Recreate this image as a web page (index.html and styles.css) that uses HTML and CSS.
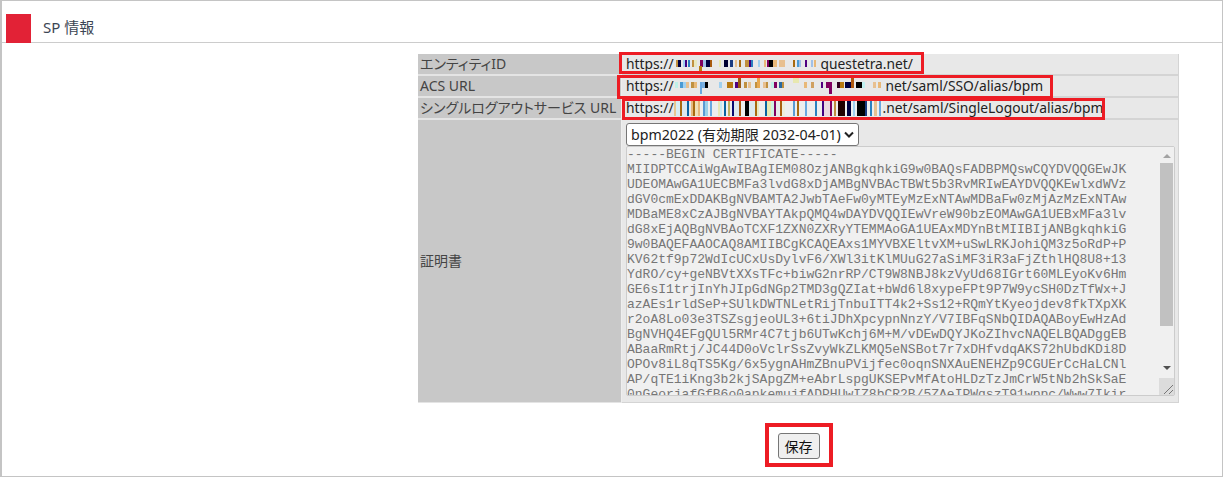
FILE: index.html
```html
<!DOCTYPE html>
<html lang="ja">
<head>
  <meta charset="UTF-8" />
  <title>SP 情報</title>
  <link rel="stylesheet" href="styles.css">
</head>
<body>
  <div class="panel">
    <header class="panel-head">
      <span class="head-mark"></span>
      <h2>SP 情報</h2>
    </header>

    <table class="sp-table">
      <tr>
        <th>エンティティID</th>
        <td><span class="url-box box-entity">https://<span class="mask mask-entity"></span>questetra.net/</span></td>
      </tr>
      <tr>
        <th>ACS URL</th>
        <td><span class="url-box box-acs">https://<span class="mask mask-acs"></span>net/saml/SSO/alias/bpm</span></td>
      </tr>
      <tr>
        <th>シングルログアウトサービス URL</th>
        <td><span class="url-box box-logout">https://<span class="mask mask-logout"></span>.net/saml/SingleLogout/alias/bpm</span></td>
      </tr>
      <tr>
        <th>証明書</th>
        <td class="cert-cell">
          <select class="cert-select">
            <option>bpm2022 (有効期限 2032-04-01)</option>
          </select>
          <div class="cert-wrap">
            <textarea class="cert-text" readonly wrap="off">-----BEGIN CERTIFICATE-----
MIIDPTCCAiWgAwIBAgIEM08OzjANBgkqhkiG9w0BAQsFADBPMQswCQYDVQQGEwJK
UDEOMAwGA1UECBMFa3lvdG8xDjAMBgNVBAcTBWt5b3RvMRIwEAYDVQQKEwlxdWVz
dGV0cmExDDAKBgNVBAMTA2JwbTAeFw0yMTEyMzExNTAwMDBaFw0zMjAzMzExNTAw
MDBaME8xCzAJBgNVBAYTAkpQMQ4wDAYDVQQIEwVreW90bzEOMAwGA1UEBxMFa3lv
dG8xEjAQBgNVBAoTCXF1ZXN0ZXRyYTEMMAoGA1UEAxMDYnBtMIIBIjANBgkqhkiG
9w0BAQEFAAOCAQ8AMIIBCgKCAQEAxs1MYVBXEltvXM+uSwLRKJohiQM3z5oRdP+P
KV62tf9p72WdIcUCxUsDylvF6/XWl3itKlMUuG27aSiMF3iR3aFjZthlHQ8U8+13
YdRO/cy+geNBVtXXsTFc+biwG2nrRP/CT9W8NBJ8kzVyUd68IGrt60MLEyoKv6Hm
GE6sI1trjInYhJIpGdNGp2TMD3gQZIat+bWd6l8xypeFPt9P7W9ycSH0DzTfWx+J
azAEs1rldSeP+SUlkDWTNLetRijTnbuITT4k2+Ss12+RQmYtKyeojdev8fkTXpXK
r2oA8Lo03e3TSZsgjeoUL3+6tiJDhXpcypnNnzY/V7IBFqSNbQIDAQABoyEwHzAd
BgNVHQ4EFgQUl5RMr4C7tjb6UTwKchj6M+M/vDEwDQYJKoZIhvcNAQELBQADggEB
ABaaRmRtj/JC44D0oVclrSsZvyWkZLKMQ5eNSBot7r7xDHfvdqAKS72hUbdKDi8D
OPOv8iL8qTS5Kg/6x5ygnAHmZBnuPVijfec0oqnSNXAuENEHZp9CGUErCcHaLCNl
AP/qTE1iKng3b2kjSApgZM+eAbrLspgUKSEPvMfAtoHLDzTzJmCrW5tNb2hSkSaE
0nGeorjafGfB6o0apkemujfADPHUwIZ8bCR2B/5ZAeIPWqszT91wppc/Www7Ikir
-----END CERTIFICATE-----</textarea>
            <div class="fake-scroll">
              <span class="arrow-up"></span>
              <span class="scroll-thumb"></span>
              <span class="arrow-down"></span>
            </div>
            <div class="fake-corner">
              <svg width="11" height="11" viewBox="0 0 11 11"><path d="M1 10 10 1M6 10 10 6" stroke="#777" fill="none"/></svg>
            </div>
          </div>
        </td>
      </tr>
    </table>

    <div class="actions">
      <span class="save-box"><button class="save-btn">保存</button></span>
    </div>
  </div>
</body>
</html>
```
FILE: styles.css
```css
* {
  box-sizing: border-box;
}

body {
  margin: 0;
  background: #fff;
  font-family: "Noto Sans", "Noto Sans CJK JP", sans-serif;
  font-size: 14px;
  font-feature-settings: "palt";
  color: #333;
}

.panel {
  height: 477px;
  border: 1px solid #c4c4c4;
  border-left-width: 2px;
}

.panel-head {
  display: flex;
  align-items: flex-start;
  height: 42px;
  padding: 13px 0 0 4px;
  border-bottom: 1px solid #ccc;
}

.head-mark {
  flex: none;
  width: 25px;
  height: 29px;
  background: #e22236;
}

.panel-head h2 {
  margin: 0 0 0 12px;
  font-size: 15px;
  font-weight: 400;
  line-height: 26px;
  color: #3c4654;
}

/* table */
.sp-table {
  width: 761px;
  margin: 11px 0 0 416px;
  border-collapse: separate;
  border-spacing: 0;
  background: #e8e8e8;
  table-layout: fixed;
}

.sp-table th {
  width: 204px;
  padding: 0 0 0 2px;
  border-right: 1px solid #eee;
  border-bottom: 2px solid #e4e4e4;
  background: #c8c8c8;
  font-weight: 400;
  color: #444;
  text-align: left;
  white-space: nowrap;
  height: 22px;
  line-height: 16px;
}

.sp-table td {
  padding: 0 0 0 4px;
  border-bottom: 2px solid #d4d4d4;
  border-right: 1px solid #d4d4d4;
  white-space: nowrap;
  height: 22px;
  font-size: 13.8px;
  color: #222;
}

.sp-table tr:last-child th,
.sp-table tr:last-child td {
  border-bottom-width: 1px;
}

/* urls with the red marker round them */
.url-box {
  position: relative;
  display: flex;
  align-items: center;
  height: 20px;
  padding-bottom: 2px;
}

.url-box::after {
  content: "";
  position: absolute;
  box-sizing: border-box;
  border: 3px solid #ed1c24;
}

.box-entity::after { left: -7px; top: -2px; width: 305px; height: 22px; }
.box-acs::after { left: -9px; top: -1px; width: 436px; height: 24px; }
.box-logout::after { left: -4px; top: 0; width: 483px; height: 22px; }

/* blurred part of the host names */
.mask {
  flex: none;
  margin-top: 2px;
  background-repeat: no-repeat;
}

.mask-entity {
  width: 147px;
  height: 14px;
  background-image:
    linear-gradient(#b87a10, #b87a10),
    linear-gradient(90deg, transparent 2px, #c09040 2px 4px, #000040 4px 7px, transparent 7px 9px, #a0d0f0 9px 11px, #400080 11px 13px, transparent 13px 14px, #2a80c0 14px 16px, transparent 16px 18px, #c09040 18px 20px, #e8e8c0 20px 23px, transparent 23px 26px, #800060 26px 29px, #a0c0e8 29px 32px, #000040 32px 36px, #a85a10 36px 38px, transparent 38px 45px, #e8e8b0 45px 47px, transparent 47px 50px, #000030 50px 54px, transparent 54px 56px, #1a3a80 56px 59px, transparent 59px 61px, #e8c090 61px 63px, transparent 63px 65px, #a86a10 65px 67px, transparent 67px 71px, #c09040 71px 75px, #400080 75px 77px, #2a80c0 77px 79px, transparent 79px 84px, #a0d0f0 84px 86px, transparent 86px 90px, #e8b878 90px 92px, transparent 92px 93px, #800060 93px 95px, #000 95px 99px, #e8b878 99px 103px, transparent 103px 105px, #e8c090 105px 111px, transparent 111px 119px, #a86a10 119px 121px, transparent 121px 123px, #4a9ad4 123px 125px, #a0c0e8 125px 127px, transparent 127px 131px, #500080 131px 133px, transparent 133px 137px, #a0c0e8 137px 139px, transparent 139px 140px, #e8b878 140px 142px, transparent 142px);
  background-size: 3px 5px, 100% 7px;
  background-position: 25px 9px, 0 3px;
}

.mask-acs {
  width: 212px;
  height: 18px;
  background-image:
    linear-gradient(90deg, transparent 26px, #6aa8e0 26px 28px, transparent 28px 155px, #800060 155px 158px, transparent 158px),
    linear-gradient(90deg, transparent 64px, #9a5a10 64px 67px, transparent 67px 83px, #e8a850 83px 86px, transparent 86px 119px, #e8e8b0 119px 125px, transparent 125px 177px, #b05a10 177px 180px, transparent 180px),
    linear-gradient(90deg, transparent 1px, #c0f0e8 1px 4px, transparent 4px 6px, #4a9ad4 6px 9px, #a0d0f0 9px 12px, #e8c090 12px 15px, transparent 15px 17px, #c09040 17px 20px, #e8b878 20px 23px, transparent 23px 28px, #7ab0e0 28px 31px, #000 31px 34px, transparent 34px 45px, #a0d0f0 45px 48px, transparent 48px 53px, #b87a10 53px 59px, transparent 59px 61px, #500080 61px 64px, #9a5a10 64px 67px, transparent 67px 70px, #c09040 70px 73px, transparent 73px 74px, #e8c090 74px 77px, transparent 77px 81px, #c09040 81px 83px, #e8a850 83px 86px, transparent 86px 89px, #e8c090 89px 92px, #c09040 92px 94px, transparent 94px 97px, #c0f0e8 97px 100px, #800060 100px 103px, transparent 103px 105px, #2a6aa0 105px 108px, #c09040 108px 110px, transparent 110px 130px, #e8b878 130px 133px, transparent 133px 137px, #d0a060 137px 140px, transparent 140px 147px, #500080 147px 149px, transparent 149px 152px, #800060 152px 158px, transparent 158px 163px, #300020 163px 166px, #b87a10 166px 170px, transparent 170px 171px, #000040 171px 177px, #b05a10 177px 180px, transparent 180px 182px, #000 182px 188px, #c0f0f0 188px 191px, transparent 191px 199px, #e8c090 199px 202px, transparent 202px 204px, #e8b878 204px 207px, transparent 207px);
  background-size: 100% 12px, 100% 6px, 100% 6px;
  background-position: 0 5px, 0 0, 0 5px;
}

.mask-logout {
  width: 209px;
  height: 16px;
  background-image: linear-gradient(90deg, #e8c890 0 2px, #d8eef4 2px 6px, #a86a10 6px 8px, #dde8ee 8px 13px, #0a62a0 13px 15px, #e8e8e8 15px 17px, #e6b87c 17px 19px, #a86a10 19px 21px, #f0e0b8 21px 24px, #e6b87c 24px 26px, #eee 26px 29px, #5a9ad4 29px 31px, #9cd0e8 31px 34px, #eee 34px 36px, #6aa8e0 36px 38px, #eee 38px 44px, #e8e8b8 44px 46px, #c8e8f0 46px 48px, #eee 48px 50px, #0a62a0 50px 52px, #eee 52px 54px, #c0b060 54px 56px, #eee 56px 58px, #0a0a70 58px 60px, #dde8ee 60px 65px, #a85a10 65px 67px, #eee 67px 71px, #000 71px 75px, #dde8ee 75px 81px, #a86a10 81px 83px, #e8e8c0 83px 85px, #eee 85px 91px, #0a62a0 91px 93px, #e8e8b0 93px 97px, #d0f0e0 97px 100px, #800060 100px 102px, #e8e8e8 102px 106px, #a86010 106px 108px, #eeeedd 108px 111px, #eee 111px 119px, #5a9ad4 119px 121px, #eee 121px 123px, #a86a10 123px 125px, #eee 125px 131px, #6aa8e0 131px 133px, #eee 133px 141px, #2a80c0 141px 143px, #eee 143px 148px, #400080 148px 150px, #e8d8e0 150px 156px, #800060 156px 158px, #eee 158px 160px, #c09040 160px 162px, #eee 162px 164px, #200000 164px 171px, #eee 171px 173px, #000040 173px 177px, #eee 177px 179px, #a0d0f0 179px 181px, #eee 181px 183px, #000 183px 191px, #1a3a80 191px 193px, #eee 193px 196px, #2a80c0 196px 198px, #eee 198px 200px, #e8c090 200px 203px, #eee 203px 205px, #6aa8e0 205px 207px, #eee 207px);
}

/* certificate cell */
.sp-table .cert-cell {
  vertical-align: top;
  padding-top: 3px;
  padding-bottom: 6px;
}

.cert-select {
  display: block;
  width: 233px;
  height: 23px;
  padding: 0 0 0 4px;
  appearance: none;
  font-family: inherit;
  font-size: 14.2px;
  font-feature-settings: inherit;
  color: #222;
  background: #fff url("data:image/svg+xml,%3Csvg xmlns='http://www.w3.org/2000/svg' width='10' height='7'%3E%3Cpath d='M1 1.5 5 5.5 9 1.5' fill='none' stroke='%23222' stroke-width='2'/%3E%3C/svg%3E") no-repeat right 4px center;
  border: 1px solid #767676;
  border-radius: 3px;
}

.cert-wrap {
  position: relative;
  width: 549px;
  height: 250px;
}

.cert-text {
  display: block;
  width: 100%;
  height: 100%;
  padding: 0;
  border: 1px solid #ccc;
  border-radius: 2px;
  background: #f0f0f0;
  color: #767676;
  font-family: "Liberation Mono", monospace;
  font-size: 13px;
  line-height: 15px;
  overflow: hidden;
  resize: none;
}

/* drawn scrollbar, sits over the textarea */
.fake-scroll {
  position: absolute;
  top: 1px;
  right: 1px;
  bottom: 18px;
  width: 15px;
  display: flex;
  flex-direction: column;
  align-items: center;
  background: #f0f0f0;
}

.arrow-up,
.arrow-down {
  flex: none;
  width: 0;
  height: 0;
  border-left: 4px solid transparent;
  border-right: 4px solid transparent;
}

.arrow-up {
  margin: 7px 0 5px;
  border-bottom: 4px solid #a3a3a3;
}

.arrow-down {
  margin: 40px 0 0;
  border-top: 4px solid #505050;
}

.scroll-thumb {
  flex: none;
  width: 13px;
  height: 163px;
  background: #c1c1c1;
}

.fake-corner {
  position: absolute;
  right: 1px;
  bottom: 1px;
  width: 15px;
  height: 17px;
  display: flex;
  align-items: flex-end;
  justify-content: flex-end;
  background: #dcdcdc;
}

/* save */
.actions {
  display: flex;
  justify-content: center;
  width: 761px;
  margin: 20px 0 0 416px;
}

.save-box {
  padding: 6px 9px 4px;
  border: 4px solid #ed1c24;
}

.save-btn {
  display: block;
  width: 42px;
  height: 26px;
  padding: 0;
  border: 1px solid #767676;
  border-radius: 3px;
  background: #efefef;
  font-family: inherit;
  font-size: 14px;
  color: #111;
}
```
